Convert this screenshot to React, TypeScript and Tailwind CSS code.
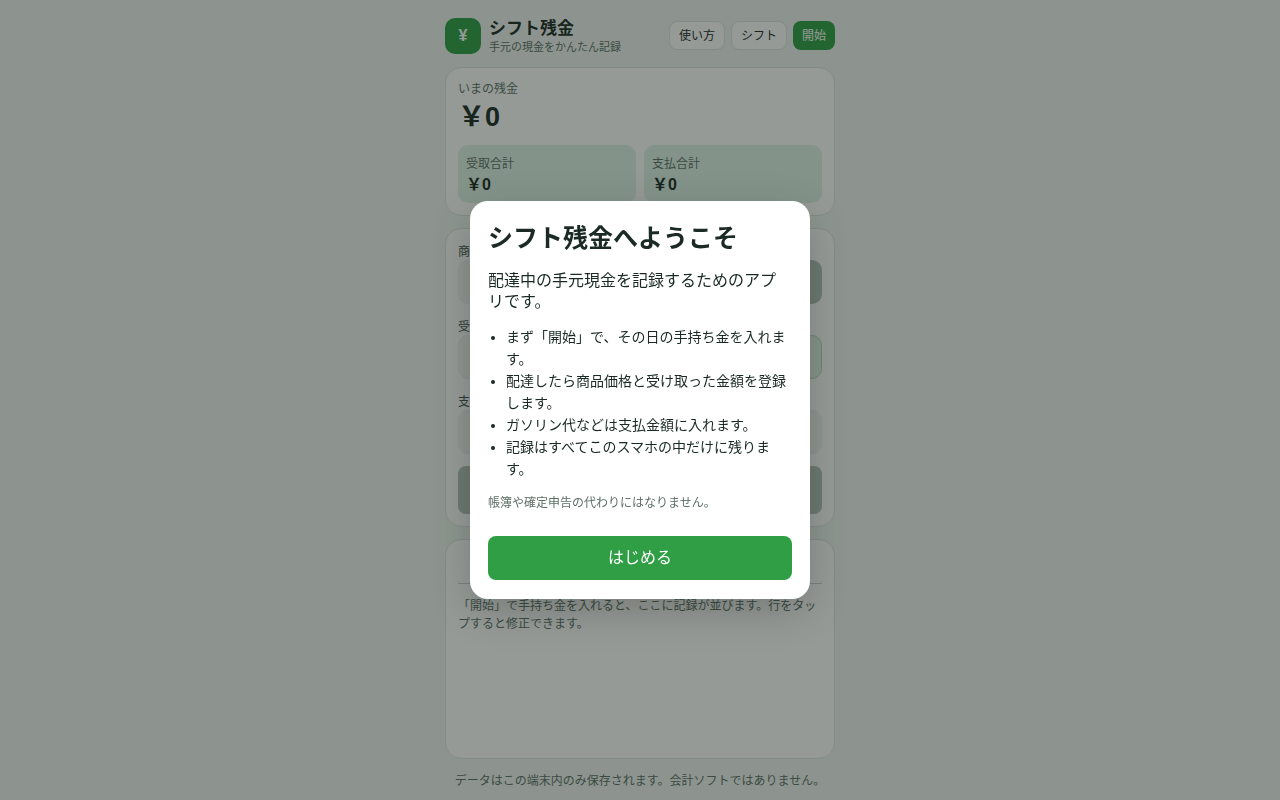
import { useState } from "react";

const TOTALS = [
  { label: "受取合計", value: "\uFFE50" },
  { label: "支払合計", value: "\uFFE50" },
];

const STEPS = [
  "まず「開始」で、その日の手持ち金を入れます。",
  "配達したら商品価格と受け取った金額を登録します。",
  "ガソリン代などは支払金額に入れます。",
  "記録はすべてこのスマホの中だけに残ります。",
];

const CARD = "rounded-2xl border border-[#dbe5de] bg-white p-3";
const INPUT = "h-11 w-full min-w-0 rounded-[10px] border border-[#eef1ef] bg-[#f3f5f4] px-3 text-base";
const LABEL = "block pt-1 text-xs leading-[15px] text-[#3f5249]";
const HEADER_BTN = "h-[29px] rounded-lg px-[9px] text-xs";

function Header() {
  return (
    <header className="flex items-center justify-between pt-[18px] pb-3">
      <div className="flex items-start gap-2">
        <span className="grid size-9 place-items-center rounded-[10px] bg-[#2f9e44] text-base font-bold text-white">
          ¥
        </span>
        <div className="pt-px">
          <h1 className="text-[17px] leading-5 font-bold">シフト残金</h1>
          <p className="pt-px text-[11px] leading-[15px] text-[#5c6f66]">手元の現金をかんたん記録</p>
        </div>
      </div>
      <div className="flex gap-1.5 pb-0.5">
        <button className={`${HEADER_BTN} border border-[#dbe5de] bg-white`}>使い方</button>
        <button className={`${HEADER_BTN} border border-[#dbe5de] bg-white`}>シフト</button>
        <button className={`${HEADER_BTN} bg-[#2f9e44] text-white`}>開始</button>
      </div>
    </header>
  );
}

function Balance() {
  return (
    <section className={CARD}>
      <p className="text-xs leading-[18px] text-[#5c6f66]">いまの残金</p>
      <p className="text-[27px] leading-[39px] font-bold">{"\uFFE50"}</p>
      <div className="mt-2 grid grid-cols-2 gap-2">
        {TOTALS.map(({ label, value }) => (
          <div key={label} className="rounded-[10px] bg-[#e0f3e6] p-2">
            <p className="text-xs leading-[22px] text-[#5c6f66]">{label}</p>
            <p className="text-base leading-5 font-bold">{value}</p>
          </div>
        ))}
      </div>
    </section>
  );
}

function EntryForm() {
  return (
    <form className={`${CARD} flex flex-col gap-3`} onSubmit={(e) => e.preventDefault()}>
      <div>
        <label htmlFor="price" className={LABEL}>商品価格</label>
        <div className="flex gap-2">
          <input id="price" inputMode="numeric" className={INPUT} />
          <button type="button" aria-label="登録" className="w-20 shrink-0 rounded-[10px] bg-[#b4c2bb]" />
        </div>
      </div>
      <div>
        <label htmlFor="received" className={LABEL}>受取金額</label>
        <div className="flex gap-2">
          <input id="received" inputMode="numeric" className={INPUT} />
          <button
            type="button"
            aria-label="同額"
            className="w-20 shrink-0 rounded-[10px] border border-[#b7d9c0] bg-[#e0f3e6]"
          />
        </div>
      </div>
      <div>
        <label htmlFor="paid" className={LABEL}>支払金額</label>
        <input id="paid" inputMode="numeric" className={INPUT} />
      </div>
      <button type="submit" aria-label="登録" className="h-12 rounded-lg bg-[#b4c2bb]" />
    </form>
  );
}

function Records() {
  return (
    <section aria-label="記録" className={`${CARD} flex-1`}>
      <div className="h-8 border-b border-[#c9d3cd]" />
      <p className="mt-[13px] text-xs leading-[18px] text-[#5c6f66]">
        「開始」で手持ち金を入れると、ここに記録が並びます。行をタップすると修正できます。
      </p>
    </section>
  );
}

function Welcome({ onClose }: { onClose: () => void }) {
  return (
    <div className="fixed inset-0 grid place-items-center bg-[#141e19]/45">
      <div
        role="dialog"
        aria-modal="true"
        aria-labelledby="welcome-title"
        className="w-[340px] max-w-full rounded-[18px] bg-white px-[18px] py-[19px] shadow-[0_12px_40px_rgba(0,0,0,0.2)]"
      >
        <h2 id="welcome-title" className="text-[25px] leading-9 font-bold">シフト残金へようこそ</h2>
        <p className="mt-3.5 pr-1 text-base leading-[21px]">配達中の手元現金を記録するためのアプリです。</p>
        <ul className="mt-3.5 list-disc pl-[18px] text-sm leading-[22px]">
          {STEPS.map((step) => (
            <li key={step}>{step}</li>
          ))}
        </ul>
        <p className="mt-3.5 text-xs leading-[18px] text-[#5c6f66]">帳簿や確定申告の代わりにはなりません。</p>
        <button onClick={onClose} className="mt-6 h-11 w-full rounded-lg bg-[#2f9e44] text-base text-white">
          はじめる
        </button>
      </div>
    </div>
  );
}

export default function App() {
  const [open, setOpen] = useState(true);

  return (
    <div
      lang="ja"
      className="min-h-screen bg-[#f0f5f1] font-['Liberation_Sans','Noto_Sans_CJK_JP',sans-serif] text-[#1b2a24]"
    >
      <div className="mx-auto flex min-h-screen max-w-[414px] flex-col px-3">
        <Header />
        <main className="flex flex-1 flex-col gap-3">
          <Balance />
          <EntryForm />
          <Records />
        </main>
        <footer className="pt-[13px] pb-2.5 text-center text-xs leading-[18px] text-[#5c6f66]">
          データはこの端末内のみ保存されます。会計ソフトではありません。
        </footer>
      </div>
      {open && <Welcome onClose={() => setOpen(false)} />}
    </div>
  );
}
